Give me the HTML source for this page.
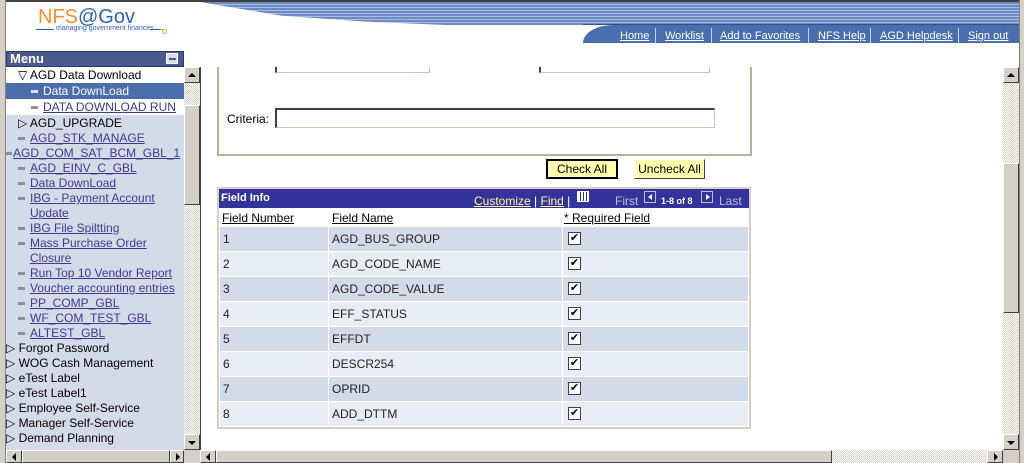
<!DOCTYPE html>
<html><head><meta charset="utf-8"><style>
*{margin:0;padding:0;box-sizing:border-box}
body{width:1024px;height:463px;overflow:hidden;background:#fff;font-family:"Liberation Sans",Arial,sans-serif;font-size:12px;position:relative}
.a{position:absolute}
.sb{background:#d4d0c8;background-image:repeating-conic-gradient(#d4d0c8 0 25%,#fff 0 50%);background-size:2px 2px}
.btn{background:#d4d0c8;border:1px solid;border-color:#fff #404040 #404040 #fff}
.tri{width:0;height:0;position:absolute}
.menu div{position:absolute;white-space:nowrap;font-size:12px;line-height:15px}
.menu a{color:#3c3c8c;text-decoration:underline}
.dash{display:inline-block;width:7px;height:3px;background:#8a8f9a;vertical-align:middle;margin-right:5px}
.row{position:absolute;left:220px;width:528px;height:24px;font-size:12px;color:#222}
.row span{position:absolute;top:5px}
.cb{position:absolute;left:348px;top:5px;width:13px;height:13px;border:1px solid #404040;background:#fff;font-size:11px;line-height:11px;text-align:center;color:#000}
.hd{color:#000;text-decoration:underline;font-size:12px;position:absolute;top:211px}
.lk{color:#fff;text-decoration:underline;position:absolute;top:30px;font-size:11px}
.sep{position:absolute;top:28px;width:1px;height:15px;background:#c8d0e8}
</style></head><body>
<div class="a" style="left:0;top:0;width:1024px;height:2px;background:#404040"></div>
<div class="a" style="left:0;top:0;width:6px;height:463px;background:#d4d0c8;border-right:1px solid #808080"></div>
<div class="a" style="left:1019px;top:0;width:5px;height:463px;background:#d4d0c8;border-left:1px solid #808080"></div>
<div class="a" style="left:200px;top:2px;width:819px;height:23px;background:repeating-linear-gradient(#6d8ac4 0 2px,#a8bde0 2px 3px);clip-path:polygon(0 0,100% 0,100% 100%,30% 100%,20% 85%,10% 60%)"></div>
<div class="a" style="left:583px;top:25px;width:436px;height:18px;background:#4a6eac;border-top-left-radius:30px 18px"></div>
<div class="a" style="left:583px;top:24px;width:436px;height:1px;background:#3c4c90"></div>
<a class="lk" style="left:620px">Home</a><div class="sep" style="left:655px"></div>
<a class="lk" style="left:665px">Worklist</a><div class="sep" style="left:711px"></div>
<a class="lk" style="left:720px">Add to Favorites</a><div class="sep" style="left:808px"></div>
<a class="lk" style="left:818px">NFS Help</a><div class="sep" style="left:870px"></div>
<a class="lk" style="left:880px">AGD Helpdesk</a><div class="sep" style="left:958px"></div>
<a class="lk" style="left:968px">Sign out</a>
<div class="a" style="left:38px;top:7px;font-size:20px;line-height:20px;color:#3060b0"><span style="color:#f09030">NFS</span>@Gov</div>
<div class="a" style="left:36px;top:29px;width:18px;height:1px;background:#3060b0"></div>
<div class="a" style="left:56px;top:25px;font-size:7px;line-height:8px;color:#3060b0">managing government finances</div>
<div class="a" style="left:150px;top:29px;width:10px;height:1px;background:#3060b0"></div>
<div class="a" style="left:160px;top:29px;width:3px;height:1px;background:#e0a040"></div>
<div class="a" style="left:162px;top:29px;width:5px;height:5px;border:1px solid #e0a040;border-radius:50%"></div>
<div class="a" style="left:6px;top:51px;width:178px;height:16px;background:#4a5a8c;border:1px solid #2a3a6c;color:#fff;font-weight:bold;font-size:13px;padding-left:3px;line-height:14px">Menu</div>
<div class="a" style="left:166px;top:53px;width:12px;height:11px;background:#d8dce8;border:1px solid #fff"><div class="a" style="left:2px;top:4px;width:7px;height:2px;background:#4a5a8c"></div></div>
<div class="a menu" style="left:6px;top:67px;width:178px;height:383px;background:#d4dbe8;overflow:hidden">
<div style="left:0;top:0;width:178px;height:48px;background:#fff"></div>
<div style="left:0;top:16px;width:178px;height:16px;background:#4a6eac"></div>
<div style="left:12px;top:1px;color:#000">▽ AGD Data Download</div>
<div style="left:25px;top:17px;color:#fff"><span class="dash" style="background:#dde"></span>Data DownLoad</div>
<div style="left:25px;top:33px"><span class="dash"></span><a>DATA DOWNLOAD RUN</a></div>
<div style="left:12px;top:49px;color:#000">▷ AGD_UPGRADE</div>
<div style="left:12px;top:64px"><span class="dash"></span><a>AGD_STK_MANAGE</a></div>
<div style="left:-1px;top:79px"><span class="dash" style="margin-right:1px"></span><a>AGD_COM_SAT_BCM_GBL_1</a></div>
<div style="left:12px;top:94px"><span class="dash"></span><a>AGD_EINV_C_GBL</a></div>
<div style="left:12px;top:109px"><span class="dash"></span><a>Data DownLoad</a></div>
<div style="left:12px;top:124px"><span class="dash"></span><a>IBG - Payment Account</a></div>
<div style="left:24px;top:139px"><a>Update</a></div>
<div style="left:12px;top:154px"><span class="dash"></span><a>IBG File Spiltting</a></div>
<div style="left:12px;top:169px"><span class="dash"></span><a>Mass Purchase Order</a></div>
<div style="left:24px;top:184px"><a>Closure</a></div>
<div style="left:12px;top:199px"><span class="dash"></span><a>Run Top 10 Vendor Report</a></div>
<div style="left:12px;top:214px"><span class="dash"></span><a>Voucher accounting entries</a></div>
<div style="left:12px;top:229px"><span class="dash"></span><a>PP_COMP_GBL</a></div>
<div style="left:12px;top:244px"><span class="dash"></span><a>WF_COM_TEST_GBL</a></div>
<div style="left:12px;top:259px"><span class="dash"></span><a>ALTEST_GBL</a></div>
<div style="left:0;top:274px;color:#000">▷ Forgot Password</div>
<div style="left:0;top:289px;color:#000">▷ WOG Cash Management</div>
<div style="left:0;top:304px;color:#000">▷ eTest Label</div>
<div style="left:0;top:319px;color:#000">▷ eTest Label1</div>
<div style="left:0;top:334px;color:#000">▷ Employee Self-Service</div>
<div style="left:0;top:349px;color:#000">▷ Manager Self-Service</div>
<div style="left:0;top:364px;color:#000">▷ Demand Planning</div>
</div>
<div class="a sb" style="left:184px;top:67px;width:16px;height:383px"></div>
<div class="a btn" style="left:184px;top:67px;width:16px;height:16px"><div class="tri" style="left:3px;top:5px;border:4px solid transparent;border-bottom:4px solid #000;border-top:0"></div></div>
<div class="a btn" style="left:184px;top:105px;width:16px;height:100px"></div>
<div class="a btn" style="left:184px;top:434px;width:16px;height:16px"><div class="tri" style="left:3px;top:6px;border:4px solid transparent;border-top:4px solid #000;border-bottom:0"></div></div>
<div class="a" style="left:6px;top:450px;width:194px;height:13px;background:#d4d0c8"></div>
<div class="a btn" style="left:6px;top:450px;width:16px;height:13px"><div class="tri" style="left:5px;top:2px;border:4px solid transparent;border-right:4px solid #000;border-left:0"></div></div>
<div class="a btn" style="left:22px;top:450px;width:148px;height:13px"></div>
<div class="a btn" style="left:170px;top:450px;width:14px;height:13px"><div class="tri" style="left:5px;top:2px;border:4px solid transparent;border-left:4px solid #000;border-right:0"></div></div>
<div class="a sb" style="left:200px;top:450px;width:819px;height:13px"></div>
<div class="a btn" style="left:200px;top:450px;width:16px;height:13px"><div class="tri" style="left:5px;top:2px;border:4px solid transparent;border-right:4px solid #000;border-left:0"></div></div>
<div class="a btn" style="left:216px;top:450px;width:616px;height:13px"></div>
<div class="a btn" style="left:987px;top:450px;width:16px;height:13px"><div class="tri" style="left:6px;top:2px;border:4px solid transparent;border-left:4px solid #000;border-right:0"></div></div>
<div class="a" style="left:1003px;top:450px;width:16px;height:13px;background:#d4d0c8"></div>
<div class="a sb" style="left:1003px;top:67px;width:16px;height:383px"></div>
<div class="a btn" style="left:1003px;top:67px;width:16px;height:16px"><div class="tri" style="left:3px;top:5px;border:4px solid transparent;border-bottom:4px solid #000;border-top:0"></div></div>
<div class="a btn" style="left:1003px;top:163px;width:16px;height:150px"></div>
<div class="a btn" style="left:1003px;top:434px;width:16px;height:16px"><div class="tri" style="left:3px;top:6px;border:4px solid transparent;border-top:4px solid #000;border-bottom:0"></div></div>
<div class="a" style="left:200px;top:67px;width:1px;height:383px;background:#404040"></div>
<div class="a" style="left:217px;top:67px;width:535px;height:89px;border:2px solid #b8b098;border-top:0"></div>
<div class="a" style="left:275px;top:67px;width:155px;height:6px;border:1px solid #c8c4b8;border-top:0;border-left:2px solid #404040"></div>
<div class="a" style="left:539px;top:67px;width:171px;height:6px;border:1px solid #c8c4b8;border-top:0;border-left:2px solid #404040"></div>
<div class="a" style="left:227px;top:112px;font-size:12px">Criteria:</div>
<div class="a" style="left:275px;top:108px;width:440px;height:20px;border:1px solid #c8c4b8;border-top:2px solid #404040;border-left:2px solid #404040"></div>
<div class="a" style="left:546px;top:159px;width:72px;height:20px;background:#ffffb0;border:2px solid #000;text-align:center;font-size:12px;line-height:16px">Check All</div>
<div class="a" style="left:634px;top:159px;width:71px;height:20px;background:#ffffb0;border:1px solid;border-color:#fff #404040 #404040 #fff;text-align:center;font-size:12px;line-height:18px">Uncheck All</div>
<div class="a" style="left:217px;top:187px;width:534px;height:242px;border:2px solid #d4d0c8;background:#fff"></div>
<div class="a" style="left:219px;top:189px;width:530px;height:19px;background:#333399"></div>
<div class="a" style="left:221px;top:192px;color:#fff;font-weight:bold;font-size:11px">Field Info</div>
<div class="a" style="left:474px;top:194px;color:#fff;font-size:12px"><u style="color:#ffff99">Customize</u> | <u style="color:#ffff99">Find</u> |</div>
<div class="a" style="left:577px;top:191px;width:12px;height:11px;background:repeating-linear-gradient(90deg,#fff 0 2px,#333399 2px 3px),#fff;border:1px solid #fff"></div>
<div class="a" style="left:615px;top:194px;color:#b8c0e0;font-size:12px">First</div>
<div class="a" style="left:644px;top:191px;width:12px;height:12px;border:1px solid #b8c0e0"><div class="tri" style="left:3px;top:2px;border:3px solid transparent;border-right:4px solid #fff;border-left:0"></div></div>
<div class="a" style="left:661px;top:196px;color:#fff;font-size:9px;font-weight:bold">1-8 of 8</div>
<div class="a" style="left:701px;top:191px;width:12px;height:12px;border:1px solid #b8c0e0"><div class="tri" style="left:4px;top:2px;border:3px solid transparent;border-left:4px solid #fff;border-right:0"></div></div>
<div class="a" style="left:719px;top:194px;color:#b8c0e0;font-size:12px">Last</div>
<span class="hd" style="left:222px">Field Number</span>
<span class="hd" style="left:332px">Field Name</span>
<span class="hd" style="left:564px">* Required Field</span>
<div class="row" style="top:227px;background:#d4dbe8"><span style="left:3px">1</span><span style="left:112px">AGD_BUS_GROUP</span><div class="cb">✔</div></div>
<div class="row" style="top:252px;background:#e8ecf4"><span style="left:3px">2</span><span style="left:112px">AGD_CODE_NAME</span><div class="cb">✔</div></div>
<div class="row" style="top:277px;background:#d4dbe8"><span style="left:3px">3</span><span style="left:112px">AGD_CODE_VALUE</span><div class="cb">✔</div></div>
<div class="row" style="top:302px;background:#e8ecf4"><span style="left:3px">4</span><span style="left:112px">EFF_STATUS</span><div class="cb">✔</div></div>
<div class="row" style="top:327px;background:#d4dbe8"><span style="left:3px">5</span><span style="left:112px">EFFDT</span><div class="cb">✔</div></div>
<div class="row" style="top:352px;background:#e8ecf4"><span style="left:3px">6</span><span style="left:112px">DESCR254</span><div class="cb">✔</div></div>
<div class="row" style="top:377px;background:#d4dbe8"><span style="left:3px">7</span><span style="left:112px">OPRID</span><div class="cb">✔</div></div>
<div class="row" style="top:402px;background:#e8ecf4"><span style="left:3px">8</span><span style="left:112px">ADD_DTTM</span><div class="cb">✔</div></div>
<div class="a" style="left:328px;top:227px;width:1px;height:199px;background:#fff"></div>
<div class="a" style="left:562px;top:227px;width:1px;height:199px;background:#fff"></div>
</body></html>
